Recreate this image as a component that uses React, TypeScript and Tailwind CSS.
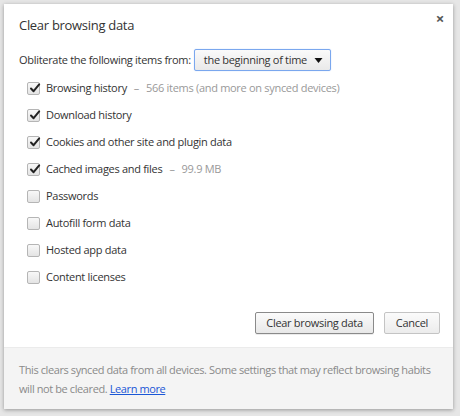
import React from 'react';

type Item = { label: string; detail?: string; checked: boolean };

const items: Item[] = [
  { label: 'Browsing history', detail: '566 items (and more on synced devices)', checked: true },
  { label: 'Download history', checked: true },
  { label: 'Cookies and other site and plugin data', checked: true },
  { label: 'Cached images and files', detail: '99.9 MB', checked: true },
  { label: 'Passwords', checked: false },
  { label: 'Autofill form data', checked: false },
  { label: 'Hosted app data', checked: false },
  { label: 'Content licenses', checked: false },
];

const Checkbox: React.FC<{ checked: boolean }> = ({ checked }) => (
  <span className="relative flex h-[13px] w-[13px] shrink-0 items-center justify-center rounded-[2px] border border-[#b5b5b5] bg-gradient-to-b from-[#f8f8f8] to-[#e4e4e4]">
    {checked && (
      <svg viewBox="0 0 12 12" className="absolute left-[1px] top-[-1px] h-[12px] w-[12px]">
        <path d="M2 6.5 L4.6 9.2 L10.2 2.4" fill="none" stroke="#222" strokeWidth="2" strokeLinecap="round" strokeLinejoin="round" />
      </svg>
    )}
  </span>
);

export default function App() {
  return (
    <div className="h-[416px] w-[460px] bg-[#e6e6e6] pl-[4px] pt-[4px] font-['Open_Sans',sans-serif] text-[11px] tracking-[-0.3px] text-[#333]">
      <div className="flex h-[405px] w-[449px] flex-col bg-white shadow-[0_1px_4px_rgba(0,0,0,0.35)]">
        <div className="relative px-[15px] pt-[11px]">
          <h1 className="text-[13px] leading-[20px] tracking-[-0.3px] text-[#333]">Clear browsing data</h1>
          <button className="absolute right-[9px] top-[7px] text-[15px] font-bold leading-none text-[#555]">×</button>
        </div>

        <div className="mt-[14px] flex items-center gap-[3px] px-[15px]">
          <span className="whitespace-nowrap">Obliterate the following items from:</span>
          <div className="flex h-[22px] w-[137px] items-center justify-between rounded-[2px] border border-[#7aa7ee] bg-gradient-to-b from-[#fafafa] to-[#e9e9e9] pl-[9px] pr-[7px] shadow-[0_0_1px_#9cc0fa]">
            <span className="whitespace-nowrap">the beginning of time</span>
            <svg viewBox="0 0 8 5" className="h-[5px] w-[9px]">
              <path d="M0 0 L8 0 L4 5 Z" fill="#111" />
            </svg>
          </div>
        </div>

        <ul className="mt-[4px] flex flex-col px-[23px]">
          {items.map((item) => (
            <li key={item.label} className="flex h-[27px] items-center gap-[6px]">
              <Checkbox checked={item.checked} />
              <span className="whitespace-nowrap">
                {item.label}
                {item.detail && (
                  <span className="text-[#999]">
                    <span className="mx-[7px]">–</span>
                    {item.detail}
                  </span>
                )}
              </span>
            </li>
          ))}
        </ul>

        <div className="mt-auto flex justify-end gap-[10px] px-[13px] pb-[13px]">
          <button className="h-[22px] rounded-[2px] border border-[#8a8a8a] bg-gradient-to-b from-[#fbfbfb] to-[#e8e8e8] px-[10px] text-[#333] shadow-[0_1px_0_rgba(0,0,0,0.08)]">
            Clear browsing data
          </button>
          <button className="h-[22px] rounded-[2px] border border-[#c4c4c4] bg-gradient-to-b from-[#fbfbfb] to-[#ececec] px-[11px] text-[#333]">
            Cancel
          </button>
        </div>

        <div className="h-[62px] border-t border-[#ebebeb] bg-[#f4f4f4] px-[15px] pt-[12px] leading-[19px] tracking-[-0.4px] text-[#8a8a8a]">
          <div className="whitespace-nowrap">
            This clears synced data from all devices. Some settings that may reflect browsing habits
          </div>
          <div className="whitespace-nowrap">
            will not be cleared. <a className="text-[#1a57d6] underline">Learn more</a>
          </div>
        </div>
      </div>
    </div>
  );
}
